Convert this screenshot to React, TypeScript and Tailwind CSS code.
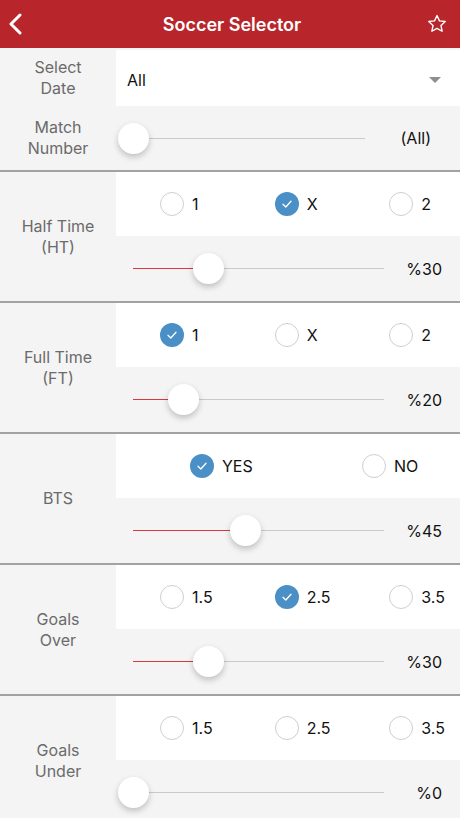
import { ReactNode } from 'react'

function Radio({ checked, label }: { checked?: boolean; label: string }) {
  return (
    <div className="flex items-center gap-[8px]">
      {checked ? (
        <div className="flex h-[24px] w-[24px] items-center justify-center rounded-full bg-[#4a8fc6]">
          <svg width="12" height="10" viewBox="0 0 12 10" fill="none">
            <path d="M2 5.2 L4.8 8 L10 2.2" stroke="white" strokeWidth="1.3" strokeLinecap="round" strokeLinejoin="round" />
          </svg>
        </div>
      ) : (
        <div className="h-[24px] w-[24px] rounded-full border border-[#cfcfcf] bg-white" />
      )}
      <span className="text-[16px] text-[#111]">{label}</span>
    </div>
  )
}

function Slider({ pct, end, trackEnd = 384, endPad = 18 }: { pct: number; end: string; trackEnd?: number; endPad?: number }) {
  const width = trackEnd - 133
  return (
    <div className="flex h-full items-center">
      <div className="relative ml-[17px] h-[31px]" style={{ width }}>
        <div className="absolute left-0 right-0 top-[15px] h-px bg-[#c9c9c9]" />
        <div className="absolute left-0 top-[15px] h-px bg-[#d9383c]" style={{ width: width * pct / 100 }} />
        <div
          className="absolute top-0 h-[31px] w-[31px] rounded-full bg-white shadow-[0_3px_6px_rgba(0,0,0,0.22)]"
          style={{ left: width * pct / 100 - 15.5 }}
        />
      </div>
      <span className="ml-auto text-[16px] text-[#111]" style={{ paddingRight: endPad }}>{end}</span>
    </div>
  )
}

function Label({ children }: { children: ReactNode }) {
  return (
    <div className="flex w-[116px] shrink-0 items-center justify-center text-center text-[16px] leading-[21px] text-[#6b6b6b]">
      {children}
    </div>
  )
}

function Section({ label, options, pct }: { label: ReactNode; options: { label: string; checked?: boolean }[]; pct: number }) {
  const two = options.length === 2
  return (
    <>
      <div className="h-[2px] bg-[#a2a2a2]" />
      <div className="flex h-[129px]">
        <Label>{label}</Label>
        <div className="flex flex-1 flex-col">
          <div className={`grid h-[64px] items-center bg-white ${two ? 'grid-cols-2' : 'grid-cols-3'}`}>
            {options.map(o => (
              <div key={o.label} className={two ? 'pl-[74px]' : 'pl-[44px]'}>
                <Radio label={o.label} checked={o.checked} />
              </div>
            ))}
          </div>
          <div className="h-[65px]">
            <Slider pct={pct} end={`%${pct}`} />
          </div>
        </div>
      </div>
    </>
  )
}

export default function App() {
  return (
    <div className="h-[818px] w-[460px] overflow-hidden bg-[#f4f4f4] font-['Inter',sans-serif]">
      {/* Header */}
      <div className="flex h-[48px] items-center bg-[#b8262b] px-[8px]">
        <div className="flex w-[32px] items-center">
          <svg width="16" height="22" viewBox="0 0 16 22" fill="none">
            <path d="M12 2 L3 11 L12 20" stroke="white" strokeWidth="3" strokeLinecap="round" strokeLinejoin="round" />
          </svg>
        </div>
        <h1 className="flex-1 pl-[4px] text-center text-[18px] font-semibold text-white">Soccer Selector</h1>
        <div className="flex w-[32px] items-center justify-end">
          <svg width="22" height="22" viewBox="0 0 24 24" fill="none" className="mr-[4px]">
            <path
              d="M12 2.8 L14.7 8.6 L21 9.3 L16.3 13.6 L17.6 19.9 L12 16.7 L6.4 19.9 L7.7 13.6 L3 9.3 L9.3 8.6 Z"
              stroke="white"
              strokeWidth="1.5"
              strokeLinejoin="round"
            />
          </svg>
        </div>
      </div>

      {/* Select Date */}
      <div className="flex h-[58px] pt-[2px]">
        <Label>Select<br />Date</Label>
        <div className="flex flex-1 items-center bg-white pl-[11px] pr-[19px] pt-[3px]">
          <span className="text-[16px] text-[#111]">All</span>
          <svg width="12" height="6" viewBox="0 0 12 6" className="ml-auto">
            <path d="M0 0 L12 0 L6 6 Z" fill="#8e8e8e" />
          </svg>
        </div>
      </div>

      {/* Match Number */}
      <div className="flex h-[64px]">
        <Label>Match<br />Number</Label>
        <div className="flex-1">
          <Slider pct={0} end="(All)" trackEnd={365} endPad={29} />
        </div>
      </div>

      <Section label={<>Half Time<br />(HT)</>} options={[{ label: '1' }, { label: 'X', checked: true }, { label: '2' }]} pct={30} />
      <Section label={<>Full Time<br />(FT)</>} options={[{ label: '1', checked: true }, { label: 'X' }, { label: '2' }]} pct={20} />
      <Section label="BTS" options={[{ label: 'YES', checked: true }, { label: 'NO' }]} pct={45} />
      <Section label={<>Goals<br />Over</>} options={[{ label: '1.5' }, { label: '2.5', checked: true }, { label: '3.5' }]} pct={30} />
      <Section label={<>Goals<br />Under</>} options={[{ label: '1.5' }, { label: '2.5' }, { label: '3.5' }]} pct={0} />
    </div>
  )
}
